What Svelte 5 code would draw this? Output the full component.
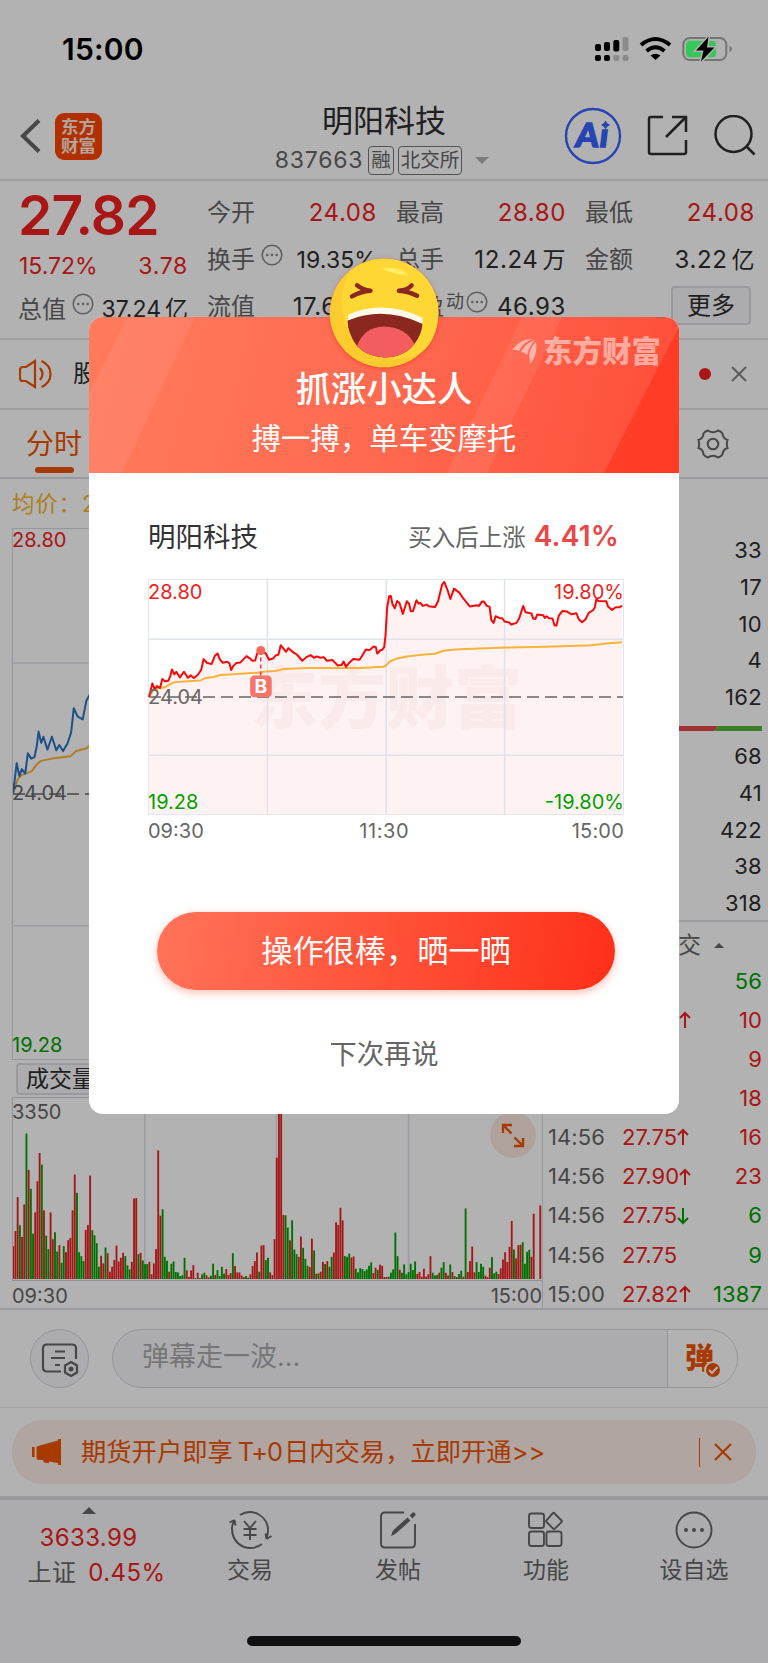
<script>
  const metrics = [
    [
      { label: '今开', value: '24.08', up: true },
      { label: '换手', value: '19.35%', info: true },
      { label: '流值', value: '17.60亿' }
    ],
    [
      { label: '最高', value: '28.80', up: true },
      { label: '总手', value: '12.24', unit: '万' },
      { label: '市盈', sup: '动', value: '46.93', info: true }
    ],
    [
      { label: '最低', value: '24.08', up: true },
      { label: '金额', value: '3.22', unit: '亿' }
    ]
  ];

  const asks = [33, 17, 10, 4, 162];
  const bids = [68, 41, 422, 38, 318];

  const trades = [
    { time: '14:56', price: '27.73', arrow: '', volume: 56, down: true },
    { time: '14:56', price: '27.90', arrow: 'up', volume: 10 },
    { time: '14:56', price: '27.75', arrow: '', volume: 9 },
    { time: '14:56', price: '27.75', arrow: '', volume: 18 },
    { time: '14:56', price: '27.75', arrow: 'up', volume: 16 },
    { time: '14:56', price: '27.90', arrow: 'up', volume: 23 },
    { time: '14:56', price: '27.75', arrow: 'down', volume: 6, down: true },
    { time: '14:56', price: '27.75', arrow: '', volume: 9, down: true },
    { time: '15:00', price: '27.82', arrow: 'up', volume: 1387, down: true }
  ];

  // one bar per minute, negative = falling minute
  const volumes = [
    99, 145, 247, -162, 127, 225, -439, 329, -272, -137, 201, 295, 380, -345, 207, -131, -90, 201, 120, -141,
    -83, 102, -49, -99, 81, 117, 124, 207, 315, -260, -81, -69, -54, 148, 163, 312, -147, -132, -108, -37,
    70, 47, -95, 78, 22, 37, 57, 101, 53, 64, 79, -69, -41, -29, 52, 243, 244, -75, 79, -56,
    -45, -45, 52, 14, 47, 90, 388, 191, -210, -67, -55, 22, -46, -53, -21, -20, -9, -11, -64, 26,
    6, 26, 42, -3, 19, 3, -14, -19, 11, 5, -10, -46, 12, -27, -9, -37, -16, 30, 12, 18,
    -78, 39, 20, 20, 11, 6, -9, -4, 14, 39, 54, 80, -22, 101, 102, -57, -64, 20, 12, 120,
    366, 530, 530, 193, -192, -155, 117, -177, -89, -75, 67, 128, -94, -61, -40, 36, 122, -86, 16, -17,
    22, 52, -45, 54, -37, -67, 80, 171, 163, 215, 177, -69, -67, -77, 65, 68, -31, -20, -33, -30,
    -24, -29, -40, -50, 18, 34, -28, 43, 40, 6, 6, -7, -19, -29, -140, -69, 28, -19, -44, -14,
    -21, -46, -27, -53, 15, 21, 7, 31, 7, 14, 69, -19, -11, -12, 19, -34, -51, 19, 11, -44,
    21, -9, 6, -15, -25, 7, -213, 21, 54, 98, 20, -51, -21, -46, -37, 10, 6, 34, -66, -17,
    -22, 15, 32, 59, 81, 51, 97, 175, -89, 62, 102, 103, -111, -46, -82, -88, 67, 197, 0, 0, 222
  ];

  const pricePoints =
    '0,352 10,311 17,328 24,319 33,325 40,298 49,305 58,303 64,289 69,269 76,284 82,276 93,293 105,276 117,294 125,287 135,295 147,285 157,270 164,238 174,249 188,253 198,228 206,221 213,239 222,249 235,246 242,251 247,271 253,259 262,250 275,248 293,229 302,235 311,243 319,242 326,219 336,212 351,221 361,240 373,236 382,226 389,225 396,196 412,216 419,205 433,217 445,225 461,243 473,232 486,226 496,234 504,230 516,234 525,232 535,243 552,241 567,257 579,256 585,245 592,261 603,248 614,238 633,240 643,224 652,209 663,211 675,200 682,202 686,221 695,212 702,209 707,202 711,167 716,82 722,49 727,48 732,72 739,85 746,63 753,69 763,102 775,64 782,72 787,94 794,93 804,61 811,71 816,69 823,78 835,74 841,79 860,81 869,64 881,14 888,6 898,32 906,57 917,26 933,38 946,57 965,80 985,76 992,78 1001,65 1007,65 1015,77 1024,81 1029,120 1036,129 1042,109 1053,114 1062,115 1069,125 1083,128 1089,134 1105,129 1113,115 1125,78 1132,97 1150,101 1155,116 1162,117 1167,104 1185,106 1190,114 1195,109 1203,115 1213,116 1219,136 1225,137 1232,107 1243,93 1257,95 1270,103 1285,100 1292,118 1302,127 1312,119 1322,99 1335,91 1340,83 1345,57 1350,63 1375,64 1380,80 1392,90 1403,82 1415,82 1422,77';

  const averagePoints =
    '0,352 12,333 23,327 50,322 62,314 75,308 105,305 155,302 170,295 195,292 215,286 325,279 350,275 380,274 405,268 475,265 635,265 705,261 713,257 723,246 745,236 775,230 810,226 860,222 885,213 920,209 995,206 1070,203 1195,201 1330,196 1375,191 1422,187';
</script>

{#snippet info()}
  <svg class="info" viewBox="0 0 22 22">
    <circle cx="11" cy="11" r="9.8" fill="none" stroke="#888" stroke-width="1.5" />
    <g fill="#888"><circle cx="6.3" cy="11" r="1.3" /><circle cx="11" cy="11" r="1.3" /><circle cx="15.7" cy="11" r="1.3" /></g>
  </svg>
{/snippet}

<div class="screen">
  <header class="navbar">
    <svg class="back" viewBox="0 0 22 36"><path d="M19 2.500 3 18l16 15.500" /></svg>
    <div class="brand"><span>东方</span><span>财富</span></div>
    <div class="heading">
      <h1>明阳科技</h1>
      <div class="code">
        <span>837663</span>
        <em>融</em>
        <em>北交所</em>
        <i class="caret"></i>
      </div>
    </div>
    <svg class="ai" viewBox="0 0 58 58">
      <circle cx="29" cy="29" r="27" />
      <g transform="translate(5 0) skewX(-7)">
        <text x="10.500" y="40">A</text>
        <text x="34.500" y="40">ı</text>
      </g>
      <path d="M41.500 13.500q1.200 3.300 4.500 4.500-3.300 1.200-4.500 4.500-1.200-3.300-4.500-4.500 3.300-1.200 4.500-4.500z" />
    </svg>
    <svg class="share" viewBox="0 0 42 42">
      <path d="M16 2H4Q2 2 2 4v33q0 2 2 2h33q2 0 2-2V25M25 2h14v15M39 2 19 22" />
    </svg>
    <svg class="search" viewBox="0 0 42 42"><circle cx="19.500" cy="19" r="18" /><path d="m32.500 31.500 8 8" /></svg>
  </header>

  <section class="quote">
    <div class="summary">
      <strong>27.82</strong>
      <div class="row change"><span>15.72%</span><span>3.78</span></div>
      <div class="row"><label>总值</label>{@render info()}<b>37.24<small>亿</small></b></div>
    </div>
    {#each metrics as column}
      <div class="metrics">
        {#each column as m}
          <div class="row">
            <label>{m.label}{#if m.sup}<sup>{m.sup}</sup>{/if}</label>
            {#if m.info}{@render info()}{/if}
            <b class:up={m.up} class:tight={m.info && !m.sup}>{m.value}{#if m.unit}<small>{m.unit}</small>{/if}</b>
          </div>
        {/each}
        {#if column.length < 3}
          <div class="row end"><button class="more">更多</button></div>
        {/if}
      </div>
    {/each}
  </section>

  <section class="notice">
    <svg class="speaker" viewBox="0 0 36 30">
      <path d="M16 2v26L7 22H4q-3 0-3-3v-8q0-3 3-3h3zM21 9q5 6 0 12M22.500 2q9 4 9 13t-9 13" />
    </svg>
    <span class="notice-text">股</span>
    <i class="dot"></i>
    <svg class="close" viewBox="0 0 16 16"><path d="m1 1 14 14M15 1 1 15" /></svg>
  </section>

  <nav class="tabs">
    <a class="active">分时</a>
    <svg class="gear" viewBox="0 0 32 32">
      <path d="M11 2.500Q16 6 21 2.500q3 .8 4.500 3 .3 5 5 6.500v0q-1.500 4 0 8-4.700 1.500-5 6.500-1.500 2.200-4.500 3Q16 26 11 29.500q-3-.8-4.500-3-.3-5-5-6.500 1.500-4 0-8 4.700-1.500 5-6.500 1.500-2.200 4.500-3z" />
      <circle cx="16" cy="16" r="5.300" />
    </svg>
  </nav>

  <section class="market">
    <div class="left">
      <div class="average">均价：27.29</div>
      <div class="plot">
        <svg viewBox="0 0 1425 704" preserveAspectRatio="none">
          <path class="grid" d="M0 178h1425M0 527h1425M356 0v704M713 0v704M1069 0v704" />
          <path class="dash" d="M0 352h1425" />
          <polyline class="avg" points={averagePoints} />
          <polyline class="blue" points={pricePoints} />
        </svg>
        <span class="top">28.80</span>
        <span class="mid">24.04</span>
        <span class="bottom">19.28</span>
      </div>
      <div class="indicator"><button>成交量</button></div>
      <div class="volume">
        <svg viewBox="0 0 1590 549" preserveAspectRatio="none">
          <path class="grid" d="M396 0v549M792 0v549M1189 0v549" />
          {#each volumes as v, i}
            <rect x={i * 6.6 - 2} y={546 - Math.abs(v)} width="5.6" height={Math.abs(v)} fill={v < 0 ? '#00a100' : '#ed2222'} />
          {/each}
        </svg>
        <span class="max">3350</span>
        <svg class="expand" viewBox="0 0 46 46">
          <circle cx="23" cy="23" r="23" fill="#fbe9e1" />
          <path d="M13 21v-8h9M13 13l8.500 8.500M33 26v8h-9M33 34l-8.500-8.500" />
        </svg>
      </div>
      <div class="times"><span>09:30</span><span>15:00</span></div>
    </div>

    <div class="right">
      <div class="book">
        {#each asks as n}<div>{n}</div>{/each}
        <svg class="ratio" viewBox="0 0 220 5"><path fill="#e94848" d="M0 0h176l-4 5H0z" /><path fill="#55b83c" d="M176 0h44v5h-48z" /></svg>
        {#each bids as n}<div>{n}</div>{/each}
      </div>
      <div class="deals">
        <div class="deals-head">成交<i></i></div>
        {#each trades as t}
          <div class="deal">
            <span class="time">{t.time}</span>
            <span class="price">{t.price}
              {#if t.arrow}
                <svg class={t.arrow} viewBox="0 0 12 18"><path d="M6 17V2M1 7l5-5 5 5" /></svg>
              {/if}
            </span>
            <span class="count" class:down={t.down}>{t.volume}</span>
          </div>
        {/each}
      </div>
    </div>
  </section>

  <section class="danmu">
    <div class="round">
      <svg viewBox="0 0 38 34">
        <path d="M20 28.500H6q-4 0-4-4v-19q0-4 4-4h25q4 0 4 4V16M14 8.500h10M10 15h14M14 22h5" />
        <path d="m30 19 6 3.500v7L30 33l-6-3.500v-7z" /><circle cx="30" cy="26" r="1.400" fill="#666" />
      </svg>
    </div>
    <div class="input">
      <span>弹幕走一波...</span>
      <div class="toggle">
        <b>弹</b>
        <svg viewBox="0 0 18 18"><circle cx="9" cy="9" r="8" /><path d="m5 9 3 3 5.500-6" /></svg>
      </div>
    </div>
  </section>

  <section class="promo">
    <div class="pill">
      <svg class="horn" viewBox="0 0 32 28"><path d="M1 9h2.600v10H1zM5.500 9.200 7 8l20-5.500V1h3v26h-3v-2l-9-1.500v1.700l-5-.6-1-2.600H7l-1.500-1.500z" /></svg>
      <span>期货开户即享<i>T+0</i>日内交易，立即开通&gt;&gt;</span>
      <u></u>
      <svg class="cross" viewBox="0 0 18 18"><path d="m1 1 16 16M17 1 1 17" /></svg>
    </div>
  </section>

  <footer class="bottom">
    <div class="index">
      <i></i>
      <b>3633.99</b>
      <span>上证<b>0.45%</b></span>
    </div>
    <div class="item">
      <svg viewBox="0 0 44 40">
        <path d="M12 5Q20 0 29 3.500 40 9 40 20q0 4-1.500 8.500M38.500 29l-1-5.500M38.500 29l5-3M34 34Q26 40 16 37 4 32 4 18q0-3 2.500-8M6.500 10l-5 2.500M6.500 10l1 5.500" />
        <path d="m16 11 6 7 6-7M15.500 19h13M15.500 25h13M22 18v12" />
      </svg>
      交易
    </div>
    <div class="item">
      <svg viewBox="0 0 44 40">
        <path d="M28 2.500H9q-4 0-4 4v27q0 4 4 4h26q4 0 4-4V14" />
        <path class="pen" d="M15 26q.5-4 3-6.500L31.500 7.500l3 3L21 22.500q-2.500 2-6 3.500zM33.500 5.500 37 2.200q3 0 2.500 3L36.500 8.500z" />
      </svg>
      发帖
    </div>
    <div class="item">
      <svg viewBox="0 0 44 40">
        <rect x="5" y="3.500" width="15" height="14.500" rx="2.500" /><rect x="5" y="21.500" width="15" height="14.500" rx="2.500" />
        <rect x="22.500" y="21.500" width="15" height="14.500" rx="2.500" /><path d="m30 3 7.500 7.500q.8.800 0 1.600L31 18.500q-1 .8-2 0L22.500 12q-.8-.8 0-1.600L29 3q.5-.5 1 0z" />
      </svg>
      功能
    </div>
    <div class="item">
      <svg viewBox="0 0 44 40">
        <circle cx="22" cy="20" r="17.500" />
        <g class="solid"><circle cx="14" cy="20" r="1.100" /><circle cx="22" cy="20" r="1.100" /><circle cx="30" cy="20" r="1.100" /></g>
      </svg>
      设自选
    </div>
    <div class="home"></div>
  </footer>

  <div class="mask"></div>

  <div class="status">
    <b>15:00</b>
    <svg viewBox="0 0 140 26">
      <g fill="#000">
        <rect x="1" y="8" width="6" height="7" rx="2" /><rect x="10" y="6" width="6" height="9" rx="2" /><rect x="19.300" y="4" width="6" height="11.500" rx="2" />
        <rect x="1" y="19" width="6" height="6" rx="2" /><rect x="10" y="19" width="6" height="6" rx="2" />
      </g>
      <g fill="#8b8b8b"><rect x="28.500" y="1" width="6" height="14" rx="2" /><rect x="19.300" y="19" width="6" height="6" rx="2" /><rect x="28.500" y="19" width="6" height="6" rx="2" /></g>
      <g fill="none" stroke="#000" stroke-width="4"><path d="M47 9q14.500-12 29 0M52.500 15q9-7.500 18 0" /></g>
      <path d="m61.500 24-5-4.500q5-3.500 10 0z" />
      <rect x="89.300" y="2" width="43" height="22" rx="6.500" fill="none" stroke="#757575" stroke-width="2" />
      <rect x="92" y="4.700" width="30" height="16.600" rx="4" fill="#34c759" />
      <path d="M135.500 9.500q5 3.500 0 7z" fill="#757575" />
      <path class="bolt" d="m114.500.8-12.500 13.700h7.500L107 25.500l13.500-14H113z" />
    </svg>
  </div>

  <div class="modal">
    <svg class="emoji" viewBox="-166 -166 332 332">
      <circle r="161" fill="#fccb2f" />
      <path d="M-100-126A161 161 0 0 1 161 10Q150 120 70 132-40 150-100 70-150-30-100-126z" fill="#ffd735" />
      <path d="M-10-133q60-6 84 22-40-2-84-22z" fill="#ffee66" />
      <path d="M-108 22Q0-30 114 32 112 65 90 92 60 132 0 132-50 130-80 98-108 60-108 22z" fill="#8a271e" />
      <path d="M-80 98Q-60 42 0 40 65 42 90 92 60 132 0 132-50 130-80 98z" fill="#f35d60" />
      <path d="M-108 22-106 5Q0-42 114 14v18Q0-22-108 22z" fill="#fffbec" />
      <g fill="none" stroke="#8a271e" stroke-width="13" stroke-linecap="round" stroke-linejoin="round">
        <path d="M-80-82q18 14 40 16-30 2-55 17M82-82q-12 14-38 16 30 2 54 15" />
      </g>
    </svg>
    <div class="banner">
      <svg class="rays" viewBox="0 0 590 156">
        <path d="M39 0h67L33 156H0V76z" fill="#fff" fill-opacity=".07" />
        <path d="M433 0h40l-75 156h-40z" fill="#fff" fill-opacity=".08" />
        <path d="M590 10v146h-75z" fill="#ff2a12" fill-opacity=".5" />
      </svg>
      <div class="watermark">
        <svg viewBox="0 0 25 26">
          <path d="M0 12Q9 0 21 1 11 4 7 13 3 11 0 12zM9 14Q13 5 23 2 17 9 15 17 12 14 9 14zM17 18q1-9 7-14 2 13-6 22 0-5-1-8z" />
        </svg>
        东方财富
      </div>
      <h2>抓涨小达人</h2>
      <p>搏一搏，单车变摩托</p>
    </div>
    <div class="body">
      <div class="gain">
        <span class="name">明阳科技</span>
        <span class="since">买入后上涨</span>
        <b>4.41%</b>
      </div>
      <div class="card-chart">
        <div class="logo">东方财富</div>
        <svg viewBox="0 0 1425 704" preserveAspectRatio="none">
          <polygon points="{pricePoints} 1422,704 0,704" fill="#f00" fill-opacity=".05" />
          <path class="grid" d="M0 178h1425M0 527h1425M356 0v704M713 0v704M1069 0v704" />
          <path class="dash" d="M0 352h1425" />
          <polyline class="avg" points={averagePoints} />
          <polyline class="red" points={pricePoints} />
          <path class="drop" d="M336 212v80" />
          <circle cx="336" cy="212" r="13.500" fill="#fb6a5b" />
          <rect x="304" y="287" width="65" height="66" rx="13" fill="#f87468" />
          <text x="336.500" y="341">B</text>
        </svg>
        <span class="lt up">28.80</span>
        <span class="rt up">19.80%</span>
        <span class="lm">24.04</span>
        <span class="lb down">19.28</span>
        <span class="rb down">-19.80%</span>
      </div>
      <div class="card-times"><span>09:30</span><span>11:30</span><span>15:00</span></div>
      <button class="primary">操作很棒，晒一晒</button>
      <button class="later">下次再说</button>
    </div>
  </div>
</div>

<style>
  :global(body) {
    margin: 0;
    background: #b2b2b2;
  }
  .screen {
    position: relative;
    width: 768px;
    height: 1663px;
    overflow: hidden;
    background: #fff;
    color: #2e2e2e;
    font-family: Inter, "Noto Sans CJK SC", sans-serif;
    line-height: 1.2;
  }
  .screen * {
    box-sizing: border-box;
  }
  .screen svg {
    display: block;
    flex: none;
  }
  h1,
  h2,
  p {
    margin: 0;
    font-weight: 400;
  }
  b {
    font-weight: 400;
  }
  em,
  i {
    font-style: normal;
  }
  u {
    text-decoration: none;
  }
  button {
    border: 0;
    padding: 0;
    color: inherit;
    font: inherit;
    background: none;
  }
  .up {
    color: #f32020;
  }

  /* status bar stays above the mask */
  .status {
    position: absolute;
    inset: 0 0 auto;
    height: 98px;
    display: flex;
    align-items: center;
    justify-content: space-between;
    padding: 0 34px 0 62px;
    color: #000;
  }
  .status b {
    font-size: 30px;
    font-weight: 600;
    letter-spacing: 0.2px;
  }
  .status svg {
    width: 140px;
    height: 26px;
  }
  .bolt {
    stroke: #b2b2b2;
    stroke-width: 3;
    paint-order: stroke;
  }

  .navbar {
    height: 181px;
    padding: 93px 11px 0 20px;
    display: flex;
    align-items: center;
    border-bottom: 2px solid #e4e4e6;
  }
  .back {
    width: 22px;
    height: 36px;
    fill: none;
    stroke: #666;
    stroke-width: 4;
  }
  .brand {
    width: 47px;
    height: 47px;
    margin-left: 13px;
    border-radius: 9px;
    background: #ff4600;
    color: #ffe9df;
    display: flex;
    flex-direction: column;
    align-items: center;
    justify-content: center;
    font-size: 17.5px;
    font-weight: 700;
    line-height: 19px;
  }
  .heading {
    width: 330px;
    margin-left: 117px;
    padding-top: 7px;
    display: flex;
    flex-direction: column;
    align-items: center;
  }
  .heading h1 {
    font-size: 31px;
    line-height: 42px;
  }
  .code {
    height: 38px;
    display: flex;
    align-items: center;
    gap: 4px;
    color: #666;
    font-size: 23px;
    margin-left: -4px;
  }
  .code span {
    margin-right: 1px;
    letter-spacing: 0.8px;
  }
  .code em {
    height: 29px;
    border: 1.5px solid #777;
    border-radius: 4px;
    padding: 0 2px;
    font-size: 19.5px;
    line-height: 26px;
  }
  .code .caret {
    margin-left: 9px;
    border: 7px solid transparent;
    border-top-color: #b4b4b4;
    border-bottom: 0;
  }
  .ai {
    width: 58px;
    height: 58px;
    margin-left: 15px;
    fill: #3764ff;
  }
  .ai circle {
    fill: none;
    stroke: #3764ff;
    stroke-width: 2.4;
  }
  .ai text {
    font: 900 33px Lato, sans-serif;
    stroke: #3764ff;
    stroke-width: 1.4;
  }
  .share {
    width: 42px;
    height: 42px;
    margin-left: 25px;
    fill: none;
    stroke: #2e2e2e;
    stroke-width: 2.5;
  }
  .search {
    width: 42px;
    height: 42px;
    margin-left: 25px;
    fill: none;
    stroke: #2e2e2e;
    stroke-width: 2.5;
  }

  .quote {
    height: 159px;
    padding: 9px 0 0 19px;
    display: grid;
    grid-template-columns: repeat(4, 169px);
    column-gap: 20px;
    border-bottom: 2px solid #e4e4e6;
    font-size: 24px;
  }
  .row {
    height: 47px;
    display: flex;
    align-items: center;
    white-space: nowrap;
  }
  .row label {
    color: #666;
    margin-left: -1px;
  }
  .row b {
    margin-left: auto;
    letter-spacing: 0.6px;
  }
  .row b.tight {
    font-size: 23px;
    letter-spacing: 0.1px;
  }
  .row small {
    margin-left: 4px;
    font-size: 23px;
  }
  .row sup {
    font-size: 18px;
    line-height: 0;
    vertical-align: 7px;
    margin-left: 2px;
  }
  .row.end {
    justify-content: flex-end;
    padding-right: 4px;
  }
  .info {
    width: 22px;
    height: 22px;
    margin: -12px 0 0 6px;
  }
  .metrics label:has(sup) + .info {
    margin-left: 2px;
  }
  .summary strong {
    display: block;
    height: 53px;
    color: #f32020;
    font-size: 55px;
    line-height: 51px;
    font-weight: 600;
    letter-spacing: -0.8px;
    margin-left: -1px;
  }
  .summary .row {
    height: 40px;
  }
  .summary .change {
    height: 47px;
    justify-content: space-between;
    color: #f32020;
    font-size: 23px;
  }
  .summary .change span:last-child {
    letter-spacing: 0.7px;
  }
  .summary .row b {
    font-size: 23px;
    letter-spacing: 0;
  }
  .more {
    width: 80px;
    height: 39px;
    border: 2px solid #dcdce2;
    border-radius: 4px;
    background: #f7f7fa;
    line-height: 33px;
    margin-top: -4px;
  }

  .notice {
    height: 70px;
    padding: 0 21px 0 19px;
    display: flex;
    align-items: center;
    border-bottom: 2px solid #e4e4e6;
    font-size: 24px;
  }
  .speaker {
    width: 36px;
    height: 30px;
    fill: none;
    stroke: #f05300;
    stroke-width: 2.2;
  }
  .notice-text {
    margin-left: 18px;
    flex: 1;
  }
  .dot {
    width: 12px;
    height: 12px;
    border-radius: 50%;
    background: #f32020;
  }
  .close {
    width: 16px;
    height: 16px;
    margin-left: 20px;
    fill: none;
    stroke: #888;
    stroke-width: 2.2;
  }
  .tabs {
    height: 69px;
    padding: 0 39px 0 26px;
    display: flex;
    align-items: center;
    justify-content: space-between;
    border-bottom: 2px solid #dcdce2;
  }
  .tabs .active {
    align-self: stretch;
    color: #f05300;
    font-size: 28px;
    line-height: 69px;
    display: flex;
    flex-direction: column;
    align-items: center;
  }
  .tabs .active::after {
    content: "";
    width: 39px;
    height: 6px;
    margin-top: -12px;
    border-radius: 3px;
    background: #f05300;
  }
  .gear {
    width: 32px;
    height: 32px;
    fill: none;
    stroke: #666;
    stroke-width: 2;
  }

  .market {
    height: 831px;
    display: grid;
    grid-template-columns: 542px 226px;
    border-bottom: 2px solid #dcdce2;
  }
  .left {
    padding-left: 12px;
    display: flex;
    flex-direction: column;
    color: #666;
    font-size: 20px;
  }
  .average {
    height: 49px;
    line-height: 49px;
    font-size: 22.5px;
    letter-spacing: 0.8px;
    color: #f7b52e;
  }
  .plot {
    position: relative;
    height: 532px;
    border: 1.5px solid #d5d9e2;
  }
  .plot > svg {
    width: 100%;
    height: 100%;
  }
  .grid {
    fill: none;
    stroke: #dfe2ea;
    stroke-width: 1.5;
    vector-effect: non-scaling-stroke;
  }
  .dash {
    fill: none;
    stroke: #666;
    stroke-width: 1.5;
    stroke-dasharray: 12 6;
    vector-effect: non-scaling-stroke;
  }
  polyline {
    fill: none;
    stroke-width: 2;
    stroke-linejoin: round;
    vector-effect: non-scaling-stroke;
  }
  .avg {
    stroke: #fbb23a;
  }
  .blue {
    stroke: #2a72c4;
  }
  .red {
    stroke: #f90808;
  }
  .plot span,
  .card-chart > span {
    position: absolute;
    line-height: 24px;
  }
  .plot .top {
    top: -1px;
    left: -1px;
    color: #f32020;
  }
  .plot .mid {
    top: 252px;
    left: -1px;
  }
  .plot .bottom {
    bottom: 2px;
    left: -1px;
    color: #00a100;
  }
  .indicator {
    height: 37px;
    padding: 3px 0 0 4px;
  }
  .indicator button {
    width: 110px;
    height: 32px;
    border: 2px solid #dcdce2;
    border-radius: 4px;
    background: #f7f7fa;
    color: #2e2e2e;
    font-size: 23px;
    line-height: 27px;
    text-align: left;
    padding-left: 8px;
  }
  .volume {
    position: relative;
    height: 184px;
    border: 1.5px solid #d0d2d8;
    border-width: 1.5px 0 1.5px 1.5px;
  }
  .volume > svg {
    width: 100%;
    height: 100%;
  }
  .volume .max {
    position: absolute;
    top: 2px;
    left: -1px;
    line-height: 24px;
  }
  .volume .expand {
    position: absolute;
    top: 14px;
    right: 6px;
    width: 46px;
    height: 46px;
  }
  .expand path {
    fill: none;
    stroke: #f05300;
    stroke-width: 2.4;
  }
  .times {
    display: flex;
    justify-content: space-between;
    line-height: 30px;
  }

  .right {
    height: 829px;
    overflow: hidden;
    border-left: 1.5px solid #dcdce2;
    font-size: 22px;
  }
  .book {
    height: 443px;
    padding: 53px 6px 0 0;
    border-bottom: 2px solid #dcdce2;
    text-align: right;
    line-height: 36.8px;
    letter-spacing: 0.3px;
  }
  .ratio {
    width: 220px;
    height: 5px;
    margin: 10px 0 7px -1px;
  }
  .deals {
    color: #666;
  }
  .deals-head {
    height: 32px;
    padding-left: 112px;
    margin-top: 7.5px;
    display: flex;
    align-items: center;
    font-size: 23px;
  }
  .deals-head i {
    margin-left: 13px;
    border: 5px solid transparent;
    border-bottom-color: #666;
    border-top: 0;
  }
  .deal {
    height: 39.1px;
    display: flex;
    align-items: center;
    padding: 0 6px 0 5px;
    letter-spacing: 0.1px;
  }
  .time {
    width: 74px;
  }
  .price {
    display: flex;
    align-items: center;
    color: #f32020;
  }
  .price svg {
    width: 12px;
    height: 18px;
    fill: none;
    stroke: #f32020;
    stroke-width: 2;
  }
  .price svg.down {
    transform: rotate(180deg);
    stroke: #00a100;
  }
  .count {
    margin-left: auto;
    color: #f32020;
  }
  .down {
    color: #00a100;
  }

  .danmu {
    height: 98px;
    padding: 0 30px;
    display: flex;
    align-items: center;
    gap: 23px;
    border-bottom: 1.5px solid #eaeaec;
  }
  .round {
    width: 59px;
    height: 59px;
    border: 1.5px solid #d5d5db;
    border-radius: 50%;
    background: #f7f7fa;
    display: grid;
    place-items: center;
  }
  .round svg {
    width: 38px;
    height: 34px;
    margin: 3px 0 0 1px;
    fill: none;
    stroke: #666;
    stroke-width: 2.2;
  }
  .input {
    flex: 1;
    height: 59px;
    border: 1.5px solid #d5d5db;
    border-radius: 30px;
    overflow: hidden;
    display: flex;
    background: #f7f7fa;
  }
  .input > span {
    flex: 1;
    padding-left: 29px;
    color: #aaa;
    font-size: 27px;
    line-height: 53px;
  }
  .toggle {
    width: 70px;
    border-left: 1.5px solid #d5d5db;
    background: #fff;
    display: flex;
    align-items: center;
    padding-left: 17px;
    color: #f05300;
  }
  .toggle b {
    font-size: 29px;
    font-weight: 900;
    line-height: 54px;
  }
  .toggle svg {
    width: 18px;
    height: 18px;
    margin: 22px 0 0 -10px;
    fill: #f05300;
    stroke: #fff;
    stroke-width: 2;
  }

  .promo {
    height: 90px;
    padding: 12px;
    border-bottom: 2px solid #e0e0e2;
  }
  .pill {
    height: 64px;
    padding: 0 24px 0 19px;
    border-radius: 30px;
    background: #fdece6;
    display: flex;
    align-items: center;
    color: #f05300;
    font-size: 25.3px;
  }
  .pill span {
    margin-left: 18px;
    flex: 1;
    white-space: nowrap;
  }
  .pill i {
    margin: 0 2px 0 5px;
    letter-spacing: -1px;
  }
  .pill u {
    width: 1.5px;
    height: 29px;
    background: #f05300;
    margin-right: 14px;
  }
  .horn {
    width: 32px;
    height: 28px;
    fill: #f05300;
  }
  .cross {
    width: 18px;
    height: 18px;
    fill: none;
    stroke: #f05300;
    stroke-width: 2.2;
  }

  .bottom {
    position: relative;
  }
  footer.bottom {
    height: 165px;
    padding: 8px 0 0 12px;
    border-top: 2px solid #d8d8da;
    background: #f7f7fa;
    display: flex;
    align-items: flex-start;
    color: #666;
    font-size: 23px;
  }
  .index {
    width: 153px;
    margin-right: 11px;
    display: flex;
    flex-direction: column;
    align-items: center;
    line-height: 35px;
    font-size: 24px;
    letter-spacing: 0.4px;
    white-space: nowrap;
  }
  .index > i {
    border: 7px solid transparent;
    border-bottom-color: #666;
    border-top: 0;
    margin: -1px 0 7px;
  }
  .index > b {
    line-height: 34px;
  }
  .index b {
    color: #f32020;
  }
  .index > span {
    margin-left: 16px;
  }
  .index span b {
    margin-left: 12px;
  }
  .item {
    width: 148px;
    padding-top: 2px;
    display: flex;
    flex-direction: column;
    align-items: center;
    line-height: 40px;
  }
  .item svg {
    width: 44px;
    height: 40px;
    fill: none;
    stroke: #666;
    stroke-width: 1.9;
  }
  .item .solid {
    fill: #666;
  }
  .item .pen {
    fill: #666;
    stroke: none;
  }
  .home {
    position: absolute;
    left: 247px;
    bottom: 17px;
    width: 274px;
    height: 10px;
    border-radius: 5px;
    background: #181818;
  }

  .mask {
    position: absolute;
    inset: 0;
    background: rgba(0, 0, 0, 0.3);
  }
  .modal {
    position: absolute;
    top: 317px;
    left: 89px;
    width: 590px;
    height: 797px;
    border-radius: 14px;
    background: #fff;
  }
  .emoji {
    position: absolute;
    top: -60px;
    left: 239px;
    width: 112px;
    height: 112px;
    z-index: 1;
    filter: drop-shadow(0 1px 2px rgba(220, 40, 10, 0.5));
  }
  .banner {
    position: relative;
    height: 156px;
    padding-top: 50px;
    border-radius: 14px 14px 0 0;
    overflow: hidden;
    background: linear-gradient(105deg, #ff7b5c, #ff6a50 50%, #ff4c38);
    color: #fff;
    text-align: center;
  }
  .rays {
    position: absolute;
    inset: 0;
    width: 590px;
    height: 156px;
  }
  .watermark {
    position: absolute;
    top: 18px;
    right: 18px;
    display: flex;
    align-items: center;
    gap: 6px;
    color: rgba(255, 255, 255, 0.5);
    font-size: 29.5px;
    font-weight: 900;
    line-height: 32px;
  }
  .watermark svg {
    width: 25px;
    height: 26px;
    fill: rgba(255, 255, 255, 0.5);
  }
  .banner h2 {
    position: relative;
    font-size: 35.3px;
    font-weight: 500;
    line-height: 46px;
  }
  .banner p {
    position: relative;
    font-size: 29.4px;
    line-height: 48px;
    margin-top: 2px;
  }
  .body {
    display: flex;
    flex-direction: column;
    align-items: center;
    padding: 41px 55px 0 59px;
  }
  .gain {
    align-self: stretch;
    height: 46px;
    display: flex;
    align-items: center;
    padding-right: 5px;
  }
  .gain .name {
    flex: 1;
    font-size: 27.5px;
    color: #333;
  }
  .gain .since {
    color: #666;
    font-size: 23.5px;
    margin: 3px 8px 0 0;
  }
  .gain b {
    color: #ea4746;
    font-size: 28px;
    font-weight: 600;
    letter-spacing: 0.2px;
  }
  .card-chart {
    position: relative;
    width: 476px;
    height: 236px;
    margin-top: 19px;
    border: 1.5px solid #e4e7ee;
    font-size: 20px;
  }
  .card-chart > svg {
    position: relative;
    width: 100%;
    height: 100%;
    overflow: visible;
  }
  .card-chart .drop {
    fill: none;
    stroke: #f33;
    stroke-width: 1.5;
    stroke-dasharray: 4 3;
    vector-effect: non-scaling-stroke;
  }
  .card-chart text {
    fill: #fff;
    font-size: 58px;
    font-weight: 700;
    text-anchor: middle;
  }
  .logo {
    position: absolute;
    left: 0;
    right: 0;
    top: 78px;
    text-align: center;
    font-size: 68px;
    font-weight: 900;
    line-height: 80px;
    color: #faf7f7;
  }
  .lt {
    top: 0;
    left: -1px;
  }
  .rt {
    top: 0;
    right: -1px;
  }
  .lm {
    top: 105px;
    left: -1px;
    color: #666;
  }
  .lb {
    bottom: 0;
    left: -1px;
  }
  .rb {
    bottom: 0;
    right: -1px;
  }
  .card-times {
    align-self: stretch;
    display: flex;
    justify-content: space-between;
    color: #666;
    font-size: 20px;
    line-height: 32px;
  }
  .card-times span:nth-child(2) {
    margin-left: -7px;
    letter-spacing: 0.6px;
  }
  .card-times span:last-child {
    letter-spacing: 0.2px;
  }
  .primary {
    width: 458px;
    height: 78px;
    margin-top: 65px;
    padding-top: 2px;
    border-radius: 39px;
    background: linear-gradient(100deg, #ff7459, #ff2f18);
    box-shadow: 0 3px 8px rgba(255, 70, 40, 0.35);
    color: #fff;
    font-size: 31.2px;
  }
  .later {
    margin: 43px 4px 0 0;
    color: #666;
    font-size: 27.3px;
    line-height: 44px;
  }
</style>
